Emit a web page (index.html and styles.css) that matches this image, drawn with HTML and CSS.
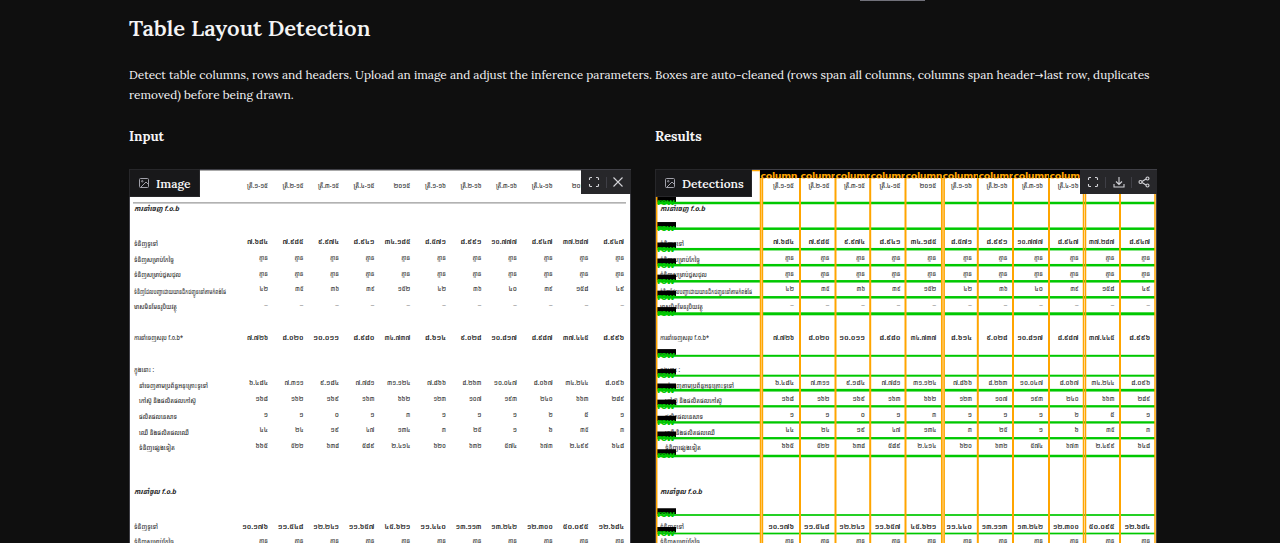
FILE: index.html
```html
<!DOCTYPE html>
<html lang="en">
<head>
  <meta charset="UTF-8" />
  <title>Table Layout Detection</title>
  <link rel="stylesheet" href="styles.css">
</head>
<body>
  <div class="tab-underline"></div>

  <main class="container">
    <h1 class="title">Table Layout Detection</h1>
    <p class="intro">Detect table columns, rows and headers. Upload an image and adjust the inference parameters. Boxes are auto-cleaned (rows span all columns, columns span header<span class="arrow">→</span>last row, duplicates removed) before being drawn.</p>

    <div class="columns">
      <section class="column">
        <h3 class="heading">Input</h3>
        <div class="panel">
          <svg class="scan" id="inputImage" viewBox="1 1 500 398"></svg>
          <div class="label label-image">
            <svg class="label-icon" viewBox="0 0 24 24"><rect x="3" y="3" width="18" height="18" rx="2"/><circle cx="8.5" cy="8.5" r="1.5"/><path d="M21 15l-5-5L5 21"/></svg>
            <span>Image</span>
          </div>
          <div class="toolbar toolbar-input">
            <svg class="tool" viewBox="0 0 24 24"><path d="M8 3H5a2 2 0 0 0-2 2v3M16 3h3a2 2 0 0 1 2 2v3M8 21H5a2 2 0 0 1-2-2v-3M16 21h3a2 2 0 0 0 2-2v-3"/></svg>
            <i class="divider"></i>
            <svg class="tool" viewBox="0 0 24 24"><path d="M3 3l18 18M21 3L3 21"/></svg>
          </div>
        </div>
      </section>

      <section class="column">
        <h3 class="heading">Results</h3>
        <div class="panel">
          <svg class="scan" id="resultImage" viewBox="1 1 500 398"></svg>
          <div class="label label-detections">
            <svg class="label-icon" viewBox="0 0 24 24"><rect x="3" y="3" width="18" height="18" rx="2"/><circle cx="8.5" cy="8.5" r="1.5"/><path d="M21 15l-5-5L5 21"/></svg>
            <span>Detections</span>
          </div>
          <div class="toolbar toolbar-results">
            <svg class="tool" viewBox="0 0 24 24"><path d="M8 3H5a2 2 0 0 0-2 2v3M16 3h3a2 2 0 0 1 2 2v3M8 21H5a2 2 0 0 1-2-2v-3M16 21h3a2 2 0 0 0 2-2v-3"/></svg>
            <i class="divider"></i>
            <svg class="tool" viewBox="0 0 24 24"><path d="M12 2v15M6 11l6 6 6-6M2 16v6h20v-6"/></svg>
            <i class="divider"></i>
            <svg class="tool" viewBox="0 0 24 24"><circle cx="19" cy="5" r="3"/><circle cx="5" cy="12" r="3"/><circle cx="19" cy="19" r="3"/><path d="M8 11l8-5M8 13l8 5"/></svg>
          </div>
        </div>
      </section>
    </div>
  </main>

  <script src="script.js"></script>
</body>
</html>
```
FILE: styles.css
```css
* {
  margin: 0;
  padding: 0;
  box-sizing: border-box;
}
body {
  font-family: Lora, 'Liberation Serif', serif;
  background-color: #0f0f0f;
  color: #f4f4f5;
  height: 543px;
  overflow: hidden;
}

/* Active tab marker, the tabs are scrolled out */
.tab-underline {
  width: 65px;
  height: 1px;
  margin-left: 860px;
  background-color: #71717a;
}

.container {
  width: 1028px;
  margin-left: 129px;
}
.title {
  font-size: 22px;
  font-weight: 600;
  line-height: 30px;
  padding-top: 12px;
}
.intro {
  margin-top: 22px;
  font-size: 11.84px;
  line-height: 20px;
}
.arrow {
  display: inline-block;
  width: 9px;
  font-family: 'DejaVu Sans', sans-serif;
  font-size: 10.5px;
  line-height: 1;
}

/* Input / results */
.columns {
  display: flex;
  gap: 24px;
  margin-top: 21px;
}
.column {
  width: 502px;
}
.heading {
  font-size: 13.3px;
  font-weight: 700;
  line-height: 22px;
  margin-bottom: 21px;
}
.panel {
  position: relative;
  height: 400px;
  background-color: #fff;
  border: 1px solid #3f3f46;
}
.scan {
  display: block;
  width: 500px;
  height: 398px;
}

/* Panel label */
.label {
  position: absolute;
  top: -1px;
  left: -1px;
  height: 28px;
  padding-left: 8px;
  display: flex;
  align-items: center;
  gap: 6px;
  font-size: 12px;
  font-weight: 600;
  white-space: nowrap;
  background-color: #18181a;
  border: 1px solid #27272a;
}
.label-image {
  width: 71px;
}
.label-detections {
  width: 97px;
}
.label-icon {
  flex-shrink: 0;
  width: 12px;
  height: 12px;
  fill: none;
  stroke: #a1a1aa;
  stroke-width: 2;
}

/* Panel buttons */
.toolbar {
  position: absolute;
  top: 0;
  right: -1px;
  height: 24px;
  display: flex;
  align-items: center;
  justify-content: space-between;
  padding: 0 7px;
  background-color: #27272a;
}
.toolbar-input {
  width: 50px;
}
.toolbar-results {
  width: 77px;
}
.tool {
  width: 12px;
  height: 12px;
  fill: none;
  stroke: #d4d4d8;
  stroke-width: 2.2;
}
.divider {
  width: 1px;
  height: 11px;
  background-color: #3f3f46;
}

/* Scanned table */
.cell {
  font-family: 'Noto Sans Khmer', 'Noto Sans', 'DejaVu Sans', sans-serif;
  font-size: 6.8px;
  font-weight: 500;
  fill: #333;
}
.strong {
  font-weight: 600;
  fill: #222;
}
.dash {
  fill: #999;
}
.section-name {
  font-style: italic;
  font-weight: bold;
}
.tag {
  font-family: 'DejaVu Sans', sans-serif;
  font-size: 9.5px;
  font-weight: bold;
}
.tag-column {
  fill: #ffa500;
}
.tag-row {
  fill: #00c800;
}
```
FILE: script.js
```js
const rightEdges = [139, 174.5, 210, 245.5, 281.3, 317, 352.5, 388, 423.7, 459.5, 495.2];

// [label, x, label baseline, label width, number baseline, bold, values]
const rows = [
  ['', 0, 0, 0, 19, false, 'ត្រី.១-១៥ ត្រី.២-១៥ ត្រី.៣-១៥ ត្រី.៤-១៥ ២០១៥ ត្រី.១-១៦ ត្រី.២-១៦ ត្រី.៣-១៦ ត្រី.៤-១៦ ២០១៦'],
  ['ការនាំចេញ f.o.b', 5, 42, 45, 0, true, ''],
  ['ទំនិញទូទៅ', 5, 76.5, 24, 75, true, '៧.៦៨៤ ៧.៩៨៥ ៩.៩៧៤ ៨.៩៤១ ៣៤.១៨៥ ៨.៥៧១ ៨.៩៩១ ១០.៧៧៧ ៨.៩៤៧ ៣៧.២៨៧ ៨.៩៤៧'],
  ['ទំនិញសម្រាប់កែច្នៃ', 5, 92.5, 40, 90.5, false, 'គ្មាន គ្មាន គ្មាន គ្មាន គ្មាន គ្មាន គ្មាន គ្មាន គ្មាន គ្មាន គ្មាន'],
  ['ទំនិញសម្រាប់ជួសជុល', 5, 108, 47, 106.5, false, 'គ្មាន គ្មាន គ្មាន គ្មាន គ្មាន គ្មាន គ្មាន គ្មាន គ្មាន គ្មាន គ្មាន'],
  ['ទំនិញដែលបញ្ជាដោយយានដឹកជញ្ជូននៅតាមកំពង់ផែ', 5, 125, 92, 122, false, '៤២ ៣៥ ៣៦ ៣៩ ១៥២ ៤២ ៣៦ ៤០ ៣៩ ១៥៨ ៤៩'],
  ['មាសមិនមែនរូបិយវត្ថុ', 5, 140, 43, 138, false, '– – – – – – – – – – –'],
  ['ការនាំចេញសរុប f.o.b*', 5, 171, 49, 171, true, '៧.៧២៦ ៨.០២០ ១០.០១១ ៨.៩៨០ ៣៤.៧៣៧ ៨.៦១៤ ៩.០២៨ ១០.៨១៧ ៨.៩៨៧ ៣៧.៤៤៥ ៨.៩៩៦'],
  ['ក្នុងនោះ :', 5, 203, 20, 0, false, ''],
  ['នាំចេញតាមប្រព័ន្ធអនុគ្រោះទូទៅ', 10, 218.5, 69, 216, false, '៦.៤៨៤ ៧.៣១១ ៩.១៨៤ ៧.៧៨១ ៣១.១២៤ ៧.៨៦៦ ៨.២៦៣ ១០.០៤៧ ៨.០៦៧ ៣៤.២៤៤ ៨.០៩៦'],
  ['កៅស៊ូ និងផលិតផលកៅស៊ូ', 10, 233.5, 57, 232, false, '១៦៨ ១៦២ ១៦៩ ១៦៣ ៦៦២ ១២៣ ១០៧ ១៩៣ ២៤០ ៦៦៣ ២៨៩'],
  ['ផលិតផលនេសាទ', 10, 249.5, 38, 248, false, '១ ១ ០ ១ ៣ ១ ១ ១ ២ ៥ ១'],
  ['ឈើ និងផលិតផលឈើ', 10, 265.5, 50, 263, false, '៤៤ ២៤ ១៩ ៤៧ ១៣៤ ៣ ២៥ ១ ៦ ៣៥ ៣'],
  ['ទំនិញផ្សេងទៀត', 10, 281, 36, 279, false, '៦៦៥ ៥២២ ៦៣៨ ៥៨៩ ២.៤១៤ ៦២០ ៦៣២ ៥៧៤ ៦៧៣ ២.៤៩៩ ៦៤៨'],
  ['ការនាំចូល f.o.b', 5, 325, 42, 0, true, ''],
  ['ទំនិញទូទៅ', 5, 359.5, 24, 360, true, '១០.១៧៦ ១១.៥៤៨ ១២.២៤១ ១១.៦៥៧ ៤៥.៦២១ ១១.៤៤០ ១៣.១១៣ ១៣.២៤២ ១២.៣០០ ៥០.០៩៥ ១២.៦៨៤'],
  ['ទំនិញសម្រាប់កែច្នៃ', 5, 374.5, 40, 373.5, false, 'គ្មាន គ្មាន គ្មាន គ្មាន គ្មាន គ្មាន គ្មាន គ្មាន គ្មាន គ្មាន គ្មាន'],
];

function cellWidth(value, bold) {
  if (value.startsWith('ត្រី')) return 21;
  if (value === 'គ្មាន') return 9;
  if (value === '–') return 4;
  const dot = value.includes('.') ? 2.2 : 0;
  return value.replace('.', '').length * (bold ? 4.7 : 4.2) + dot;
}

function text(value, x, y, width, cls) {
  return `<text class="cell ${cls}" x="${x}" y="${y}" textLength="${width}" lengthAdjust="spacingAndGlyphs">${value}</text>`;
}

function drawTable() {
  let out = '<rect width="502" height="400" fill="#fff"/>';
  out += '<path d="M0 1.5H502" stroke="#aaa"/><path d="M4 33.8H497" stroke="#999" stroke-width="1.2"/>';
  for (const [label, x, labelY, width, y, bold, values] of rows) {
    const section = bold && !values;
    if (label) out += text(label, x, labelY, width, section ? 'strong section-name' : '');
    if (!values) continue;
    values.split(' ').forEach((value, i) => {
      const w = cellWidth(value, bold);
      const cls = value === '–' ? 'dash' : bold ? 'strong' : '';
      out += text(value, rightEdges[i] - w, y, w, cls);
    });
  }
  return out;
}

// Detected boxes: [position, thickness]
const rowLines = [[34, 2.5], [59.7, 2.5], [80.2, 2.5], [96.2, 2.5], [112.3, 2.5], [128.3, 2.5], [144.8, 3],
  [186.8, 2], [206.7, 2], [221.2, 2.7], [237.3, 2.3], [253.4, 2.3], [269.2, 2.3], [287, 2.5], [346, 1.7], [364.5, 1.7]];
const columnLines = [[1.7, 1.5], [105.5, 1.5], [107.6, 1.2], [145, 2], [180.5, 2], [215.2, 2], [250.5, 2], [286.7, 1.5],
  [289.2, 1.2], [322.8, 2], [358, 2], [394, 2], [428.5, 1.5], [430.5, 1.5], [465, 2], [500, 1.5]];
const columnTags = [105, 145, 180, 215, 250, 287, 323, 358, 394, 430, 465];

function drawBoxes() {
  let out = '';
  for (const [y, h] of rowLines) {
    out += `<rect x="2" y="${y - 6.5}" width="19" height="5.5" fill="#000"/>`;
    out += `<text class="tag tag-row" x="2" y="${y + 2.3}" textLength="18">row</text>`;
    // cover the upper part of the letters
    out += `<rect x="2" y="${y - 6.5}" width="19" height="3.7" fill="#000"/>`;
    out += `<rect x="1" y="${y - h / 2}" width="499" height="${h}" fill="#00c800"/>`;
  }
  out += '<rect x="286" y="9" width="4" height="391" fill="#ffd27a"/><rect x="105" y="9" width="3" height="391" fill="#ffd27a"/>';
  for (const [x, w] of columnLines) {
    out += `<rect x="${x - w / 2}" y="1" width="${w}" height="399" fill="#ffa500"/>`;
  }
  out += '<path d="M1 1.5H105" stroke="#ffa500" stroke-width="1.5"/>';
  out += '<rect x="105" y="0" width="396" height="9" fill="#000"/>';
  for (const x of columnTags) {
    out += `<rect x="${x}" y="0" width="37" height="9" fill="#000"/>`;
    out += `<svg x="${x}" y="0" width="38" height="9.5"><text class="tag tag-column" x="0.5" y="9.5" textLength="37">column</text></svg>`;
  }
  return out;
}

document.getElementById('inputImage').innerHTML = drawTable();
document.getElementById('resultImage').innerHTML = drawTable() + drawBoxes();
```
